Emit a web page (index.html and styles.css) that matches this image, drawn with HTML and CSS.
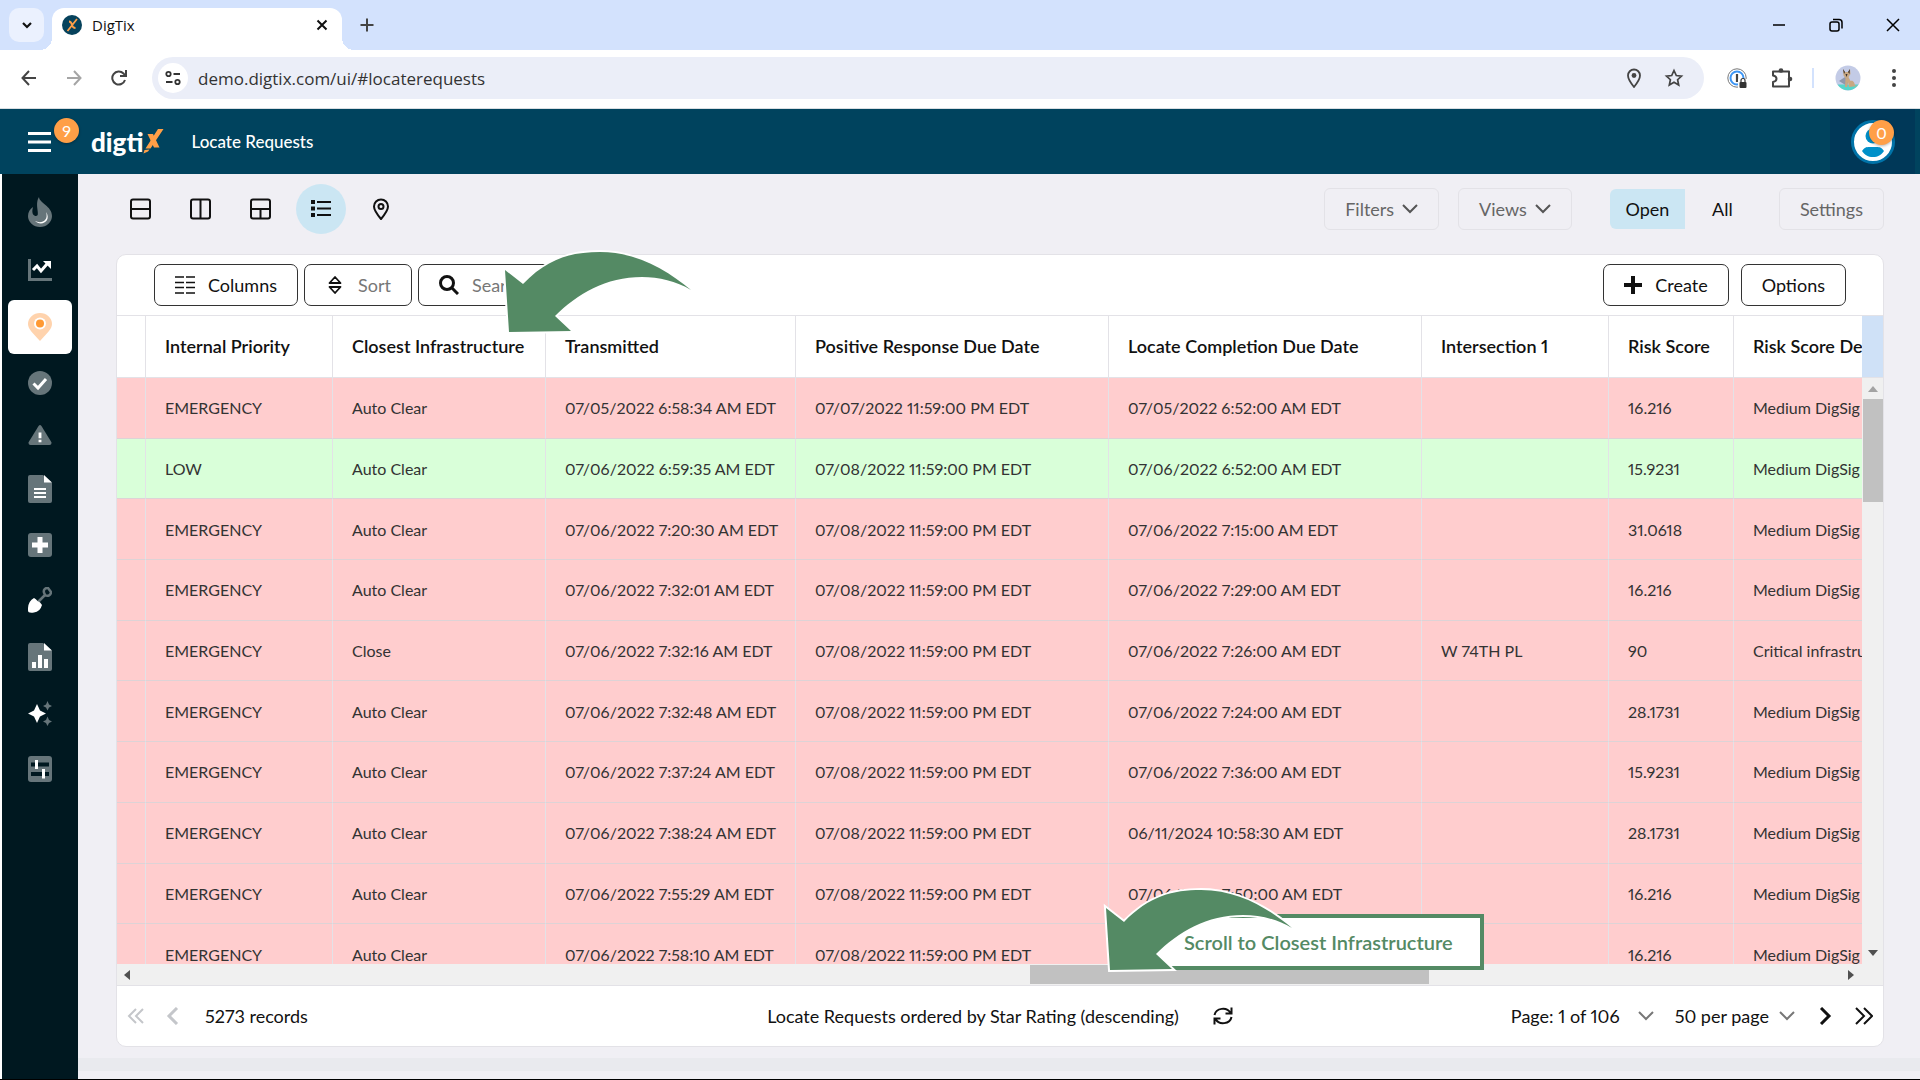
FILE: index.html
```html
<!DOCTYPE html>
<html lang="en">
<head>
    <meta charset="UTF-8">
    <meta name="viewport" content="width=device-width, initial-scale=1.0">
    <title>DigTix</title>
    <link rel="stylesheet" href="styles.css">
</head>
<body>
    <!-- Browser tabs -->
    <div class="tab-strip">
        <button class="tab-search" aria-label="Search tabs">
            <svg width="12" height="8" viewBox="0 0 12 8"><path d="M2 2l4 4 4-4" fill="none" stroke="#111" stroke-width="2.2"/></svg>
        </button>
        <div class="tab">
            <svg width="20" height="20" viewBox="0 0 20 20"><circle cx="10" cy="10" r="10" fill="#06425c"/><path d="M15 4L5.500 16M7 6.500c2 0 2.500 1.500 3 3.500s1.500 3 3.500 3" fill="none" stroke="#ff9f47" stroke-width="1.800"/></svg>
            <span class="tab-title">DigTix</span>
            <button class="tab-close" aria-label="Close tab">
                <svg width="12" height="12" viewBox="0 0 12 12"><path d="M1.500 1.500l9 9M10.500 1.500l-9 9" stroke="#111" stroke-width="2"/></svg>
            </button>
        </div>
        <button class="new-tab" aria-label="New tab">
            <svg width="14" height="14" viewBox="0 0 14 14"><path d="M7 .5v13M.5 7h13" stroke="#444" stroke-width="2"/></svg>
        </button>
        <div class="window-buttons">
            <button aria-label="Minimize"><svg width="14" height="14" viewBox="0 0 14 14"><path d="M1 7h12" stroke="#000" stroke-width="1.500"/></svg></button>
            <button aria-label="Restore"><svg width="14" height="14" viewBox="0 0 14 14" fill="none" stroke="#000" stroke-width="1.500"><rect x="1" y="4" width="9" height="9" rx="2"/><path d="M4 1.500h6a3 3 0 0 1 3 3v6"/></svg></button>
            <button aria-label="Close"><svg width="14" height="14" viewBox="0 0 14 14"><path d="M1 1l12 12M13 1L1 13" stroke="#000" stroke-width="1.500"/></svg></button>
        </div>
    </div>

    <!-- Address bar -->
    <div class="browser-bar">
        <button class="nav-button" aria-label="Back"><svg width="16" height="16" viewBox="0 0 16 16" fill="none" stroke="#444" stroke-width="2"><path d="M15 8H2M8 1L1.500 8 8 15"/></svg></button>
        <button class="nav-button" aria-label="Forward"><svg width="16" height="16" viewBox="0 0 16 16" fill="none" stroke="#a5a5a5" stroke-width="2"><path d="M1 8h13M8 1l6.500 7L8 15"/></svg></button>
        <button class="nav-button" aria-label="Reload"><svg width="16" height="16" viewBox="0 0 16 16" fill="none" stroke="#444" stroke-width="2"><path d="M14 10a6.500 6.500 0 1 1-1.500-6.500L14.500 6M15 0v6H9"/></svg></button>
        <div class="address">
            <button class="site-info" aria-label="Site information"><svg width="16" height="16" viewBox="0 0 16 16" fill="none" stroke="#333" stroke-width="1.800"><circle cx="3.500" cy="4" r="2.200"/><path d="M8.500 4H15M1 12h6.500"/><circle cx="12.500" cy="12" r="2.200"/></svg></button>
            <input class="url" type="text" aria-label="Address" value="demo.digtix.com/ui/#locaterequests">
            <button class="nav-button" aria-label="Location"><svg width="16" height="20" viewBox="0 0 16 20"><path d="M8 19C4 14 2 11 2 7.500a6 6 0 0 1 12 0C14 11 12 14 8 19z" fill="none" stroke="#444" stroke-width="1.800"/><circle cx="8" cy="7.500" r="2.400" fill="#444"/></svg></button>
            <button class="nav-button" aria-label="Bookmark"><svg width="20" height="20" viewBox="0 0 20 20"><path d="M10 2.500l2.300 5 5.200.6-3.900 3.600 1.100 5.300-4.700-2.700L5.300 17l1.100-5.300L2.500 8.100l5.200-.6z" fill="none" stroke="#444" stroke-width="1.700"/></svg></button>
        </div>
        <div class="extensions">
            <button class="nav-button" aria-label="Password manager"><svg width="20" height="20" viewBox="0 0 20 20" fill="none"><circle cx="10" cy="10" r="9.200" stroke="#777" stroke-width="1"/><circle cx="10" cy="10" r="6.500" stroke="#3d96f5" stroke-width="2"/><path d="M10 6v8" stroke="#444" stroke-width="2.200"/><rect x="11" y="11" width="9" height="9" fill="#fff"/><rect x="12.500" y="14" width="7" height="6" rx="1" fill="#333"/><path d="M14 14v-1.500a2 2 0 0 1 4 0V14" stroke="#333" stroke-width="1.200"/></svg></button>
            <button class="nav-button" aria-label="Extensions"><svg width="22" height="22" viewBox="0 0 22 22"><path d="M2 4.500h16v15H2V15c2.500-.5 3.500-1.500 3.500-3.200S4.500 9 2 8.500z" fill="none" stroke="#444" stroke-width="2" stroke-linejoin="round"/><circle cx="10" cy="3.500" r="2.300" fill="#444"/><circle cx="19" cy="12" r="2.300" fill="#444"/></svg></button>
            <span class="divider"></span>
            <button class="nav-button" aria-label="Profile"><svg width="26" height="26" viewBox="0 0 26 26"><circle cx="13" cy="13" r="12.500" fill="#c3cbe6"/><path d="M2.500 19.500h21a12.500 12.500 0 0 1-21 0z" fill="#55d6cb"/><path d="M4 16l6-4 4 2-2 7z" fill="#8f98ad"/><path d="M8 4l2 3h3l2-3 .5 5-2 3 2 4c3-1 4 2 4.500 4.500l3 .5-9 1-1-5-1 5h-2l.5-9-2-2.500z" fill="#c8a882"/><path d="M8 4l2 3-1 2zM15 4l-2 3 1.500 2zM10.500 9h2l-1 3z" fill="#3a302c"/></svg></button>
            <button class="nav-button" aria-label="Menu"><svg width="4" height="18" viewBox="0 0 4 18" fill="#444"><circle cx="2" cy="2" r="2"/><circle cx="2" cy="9" r="2"/><circle cx="2" cy="16" r="2"/></svg></button>
        </div>
    </div>

    <!-- App header -->
    <header class="app-header">
        <button class="menu-button" aria-label="Main menu">
            <svg width="23" height="20" viewBox="0 0 23 20"><path d="M0 1.500h23M0 10h23M0 18.500h23" stroke="#fff" stroke-width="3"/></svg>
            <span class="badge">9</span>
        </button>
        <a class="logo" href="#">digti<svg width="21" height="25" viewBox="0 0 21 25" fill="#ff9f47"><path d="M20.500 0H15L2.500 19.500H7.500zM1.500 21l5-.5L5 22.500l-4.500 2z"/><path d="M4.500 5h5.500l6.500 13.500H11z"/></svg></a>
        <h1 class="page-title">Locate Requests</h1>
        <button class="user-button" aria-label="Account">
            <svg width="44" height="46" viewBox="0 0 44 46"><circle cx="22" cy="23" r="20.500" fill="#fff" stroke="#0073a8" stroke-width="3"/><circle cx="22" cy="17" r="7.500" fill="#0090c9"/><path d="M11 32c3-5 6-4 11-4s8-1 11 4c-3 4-6 6-11 6s-8-2-11-6z" fill="#0090c9"/></svg>
            <span class="badge">0</span>
        </button>
    </header>

    <div class="app">
        <nav class="sidebar" aria-label="Modules">
            <a href="#" aria-label="Heat"><svg width="24" height="30" viewBox="0 0 24 30"><path d="M11 0c0 6 13 9 13 19a12 11 0 0 1-24 0c0-4 2-7 5-9-2 7 1 9 3 9C13 19 6 8 11 0z" fill="#66757a"/><path d="M18 15c3 9-5 12-11 9 6 6 17 0 11-9z" fill="#fff"/></svg></a>
            <a href="#" aria-label="Dashboard"><svg width="24" height="26" viewBox="0 0 24 26"><path d="M1.500 2v20.500H24" fill="none" stroke="#66757a" stroke-width="3"/><path d="M5 13l4-4 4 5 6-7" fill="none" stroke="#fff" stroke-width="3"/><path d="M15 4h8v8z" fill="#fff"/></svg></a>
            <a class="active" href="#" aria-label="Locate requests"><svg width="24" height="28" viewBox="0 0 24 28"><path d="M12 28C5 20 0 16 0 11a12 11 0 0 1 24 0c0 5-5 9-12 17z" fill="#ffd3ad"/><circle cx="12" cy="10.500" r="6" fill="#fff"/><circle cx="12" cy="10.500" r="4" fill="#ff9933"/></svg></a>
            <a href="#" aria-label="Completed"><svg width="24" height="24" viewBox="0 0 24 24"><circle cx="12" cy="12" r="12" fill="#66757a"/><path d="M5.500 12.500l4.500 4.500 8-9" fill="none" stroke="#fff" stroke-width="3"/></svg></a>
            <a href="#" aria-label="Alerts"><svg width="24" height="20" viewBox="0 0 24 21"><path d="M10.500 1q1.500-2 3 0L24 18q.5 3-2 3H2q-2.500 0-2-3z" fill="#66757a"/><path d="M12 8v6M12 15.500v2.500" stroke="#fff" stroke-width="3"/></svg></a>
            <a href="#" aria-label="Documents"><svg width="24" height="28" viewBox="0 0 24 28"><path d="M2 0h13l9 8v18q0 2-2 2H2q-2 0-2-2V2q0-2 2-2z" fill="#66757a"/><path d="M16 0l8 7.500h-8z" fill="#fff"/><path d="M6 14h12M6 18h12M6 22h12" stroke="#fff" stroke-width="2"/></svg></a>
            <a href="#" aria-label="Add"><svg width="24" height="24" viewBox="0 0 24 24"><rect width="24" height="24" rx="3" fill="#66757a"/><path d="M12 4v16M4 12h16" stroke="#fff" stroke-width="5"/></svg></a>
            <a href="#" aria-label="Excavators"><svg width="24" height="26" viewBox="0 0 24 26"><path d="M10 15l7-7M16 5.500c-1-3 2-5 4-4.500l3 4c0 3-3 5-6 3z" fill="none" stroke="#66757a" stroke-width="2.500"/><path d="M6 11q2 1 3.500 3 3 1 4.500 4-2 7-8 7.500-6 1-6-2-.5-9 6-12.500z" fill="#fff"/></svg></a>
            <a href="#" aria-label="Reports"><svg width="24" height="28" viewBox="0 0 24 28"><path d="M2 0h13l9 8v18q0 2-2 2H2q-2 0-2-2V2q0-2 2-2z" fill="#66757a"/><path d="M16 0l8 7.500h-8z" fill="#fff"/><path d="M6 25v-6M12 25V12M18 25v-9" stroke="#fff" stroke-width="4"/></svg></a>
            <a href="#" aria-label="Insights"><svg width="24" height="25" viewBox="0 0 24 25"><path d="M9 3l3 6.500 6 3-6 3L9 22l-3-6.500-6-3 6-3z" fill="#fff"/><path d="M19.500 0l1.500 3.500 3 1.500-3 1.500-1.500 3-1.500-3-3-1.500 3-1.500zM19.500 15.500L21 19l3 1.500-3 1.500-1.500 3-1.500-3-3-1.500 3-1.500z" fill="#66757a"/></svg></a>
            <a href="#" aria-label="Preferences"><svg width="24" height="26" viewBox="0 0 24 26"><rect width="24" height="26" rx="3" fill="#66757a"/><path d="M3 8.500h18M3 18h18" stroke="#001820" stroke-width="4"/><path d="M8.500 4v9M15.500 13v9.500" stroke="#fff" stroke-width="3"/></svg></a>
        </nav>

        <main class="content">
            <!-- Layout switcher and page filters -->
            <div class="page-tools">
                <div class="layouts">
                    <button aria-label="Rows"><svg width="22" height="22" viewBox="0 0 22 22"><rect x="1" y="1.500" width="19" height="19" rx="2"/><path d="M1 11h19"/></svg></button>
                    <button aria-label="Split"><svg width="22" height="22" viewBox="0 0 22 22"><rect x="1" y="1.500" width="19" height="19" rx="2"/><path d="M10.500 1.500v19"/></svg></button>
                    <button aria-label="Mixed"><svg width="22" height="22" viewBox="0 0 22 22"><rect x="1" y="1.500" width="19" height="19" rx="2"/><path d="M1 11h19M10.500 11v9.500"/></svg></button>
                    <button class="selected" aria-label="List"><svg width="22" height="22" viewBox="0 0 22 22"><path d="M7 4h14M7 10.500h14M7 17h14"/><path d="M1 4h4M1 10.500h4M1 17h4" stroke-width="4"/></svg></button>
                    <button aria-label="Map"><svg width="22" height="22" viewBox="0 0 22 22"><path d="M11 21C6 15 4 12 4 8.500a7 7 0 0 1 14 0C18 12 16 15 11 21z"/><circle cx="11" cy="8.500" r="2.500"/></svg></button>
                </div>
                <div class="filters">
                    <button class="ghost">Filters <svg width="16" height="10" viewBox="0 0 16 10"><path d="M1 1l7 7 7-7"/></svg></button>
                    <button class="ghost">Views <svg width="16" height="10" viewBox="0 0 16 10"><path d="M1 1l7 7 7-7"/></svg></button>
                    <div class="toggle">
                        <button class="on">Open</button>
                        <button>All</button>
                    </div>
                    <button class="ghost">Settings</button>
                </div>
            </div>

            <section class="panel">
                <div class="panel-tools">
                    <button class="outlined"><svg width="20" height="20" viewBox="0 0 20 20"><path d="M0 2h9M11 2h9M0 7.500h9M11 7.500h9M0 12.500h9M11 12.500h9M0 18h9M11 18h9" stroke="#111" stroke-width="1.500"/></svg>Columns</button>
                    <button class="outlined muted"><svg width="20" height="20" viewBox="0 0 20 20" fill="none" stroke="#111" stroke-width="1.800" stroke-linejoin="round"><path d="M4.500 8L10 2l5.500 6zM4.500 12l5.500 6 5.500-6z"/></svg>Sort</button>
                    <button class="outlined muted search"><svg width="20" height="20" viewBox="0 0 20 20" fill="none" stroke="#111" stroke-width="3"><circle cx="8" cy="8" r="6.500"/><path d="M13 13l6 6"/></svg>Search</button>
                    <span class="spacer"></span>
                    <button class="outlined create"><svg width="18" height="20" viewBox="0 0 18 20"><path d="M9 1v18M0 10h18" stroke="#111" stroke-width="4"/></svg>Create</button>
                    <button class="outlined">Options</button>
                </div>

                <div class="grid">
                    <div class="grid-view">
                        <table>
                            <colgroup>
                                <col class="w-stub"><col class="w-m"><col class="w-l"><col class="w-xl"><col class="w-xxl"><col class="w-xxl"><col class="w-m"><col class="w-s"><col class="w-xl">
                            </colgroup>
                            <thead>
                                <tr><th></th><th>Internal Priority</th><th>Closest Infrastructure</th><th>Transmitted</th><th>Positive Response Due Date</th><th>Locate Completion Due Date</th><th>Intersection 1</th><th>Risk Score</th><th>Risk Score Details</th></tr>
                            </thead>
                            <tbody>
                                <tr><td></td><td>EMERGENCY</td><td>Auto Clear</td><td>07/05/2022 6:58:34 AM EDT</td><td>07/07/2022 11:59:00 PM EDT</td><td>07/05/2022 6:52:00 AM EDT</td><td></td><td>16.216</td><td>Medium DigSig</td></tr>
                                <tr class="low"><td></td><td>LOW</td><td>Auto Clear</td><td>07/06/2022 6:59:35 AM EDT</td><td>07/08/2022 11:59:00 PM EDT</td><td>07/06/2022 6:52:00 AM EDT</td><td></td><td>15.9231</td><td>Medium DigSig</td></tr>
                                <tr><td></td><td>EMERGENCY</td><td>Auto Clear</td><td>07/06/2022 7:20:30 AM EDT</td><td>07/08/2022 11:59:00 PM EDT</td><td>07/06/2022 7:15:00 AM EDT</td><td></td><td>31.0618</td><td>Medium DigSig</td></tr>
                                <tr><td></td><td>EMERGENCY</td><td>Auto Clear</td><td>07/06/2022 7:32:01 AM EDT</td><td>07/08/2022 11:59:00 PM EDT</td><td>07/06/2022 7:29:00 AM EDT</td><td></td><td>16.216</td><td>Medium DigSig</td></tr>
                                <tr><td></td><td>EMERGENCY</td><td>Close</td><td>07/06/2022 7:32:16 AM EDT</td><td>07/08/2022 11:59:00 PM EDT</td><td>07/06/2022 7:26:00 AM EDT</td><td>W 74TH PL</td><td>90</td><td>Critical infrastru</td></tr>
                                <tr><td></td><td>EMERGENCY</td><td>Auto Clear</td><td>07/06/2022 7:32:48 AM EDT</td><td>07/08/2022 11:59:00 PM EDT</td><td>07/06/2022 7:24:00 AM EDT</td><td></td><td>28.1731</td><td>Medium DigSig</td></tr>
                                <tr><td></td><td>EMERGENCY</td><td>Auto Clear</td><td>07/06/2022 7:37:24 AM EDT</td><td>07/08/2022 11:59:00 PM EDT</td><td>07/06/2022 7:36:00 AM EDT</td><td></td><td>15.9231</td><td>Medium DigSig</td></tr>
                                <tr><td></td><td>EMERGENCY</td><td>Auto Clear</td><td>07/06/2022 7:38:24 AM EDT</td><td>07/08/2022 11:59:00 PM EDT</td><td>06/11/2024 10:58:30 AM EDT</td><td></td><td>28.1731</td><td>Medium DigSig</td></tr>
                                <tr><td></td><td>EMERGENCY</td><td>Auto Clear</td><td>07/06/2022 7:55:29 AM EDT</td><td>07/08/2022 11:59:00 PM EDT</td><td>07/06/2022 7:50:00 AM EDT</td><td></td><td>16.216</td><td>Medium DigSig</td></tr>
                                <tr><td></td><td>EMERGENCY</td><td>Auto Clear</td><td>07/06/2022 7:58:10 AM EDT</td><td>07/08/2022 11:59:00 PM EDT</td><td></td><td></td><td>16.216</td><td>Medium DigSig</td></tr>
                            </tbody>
                        </table>
                    </div>
                    <div class="v-side">
                        <div class="v-head"></div>
                        <div class="v-scroll">
                            <svg width="10" height="6" viewBox="0 0 10 6"><path d="M0 6l5-6 5 6z" fill="#a3a3a3"/></svg>
                            <div class="v-track"><div class="v-thumb"></div></div>
                            <svg width="10" height="6" viewBox="0 0 10 6"><path d="M0 0l5 6 5-6z" fill="#505050"/></svg>
                        </div>
                    </div>
                </div>
                <div class="h-scroll">
                    <svg width="6" height="10" viewBox="0 0 6 10"><path d="M6 0L0 5l6 5z" fill="#505050"/></svg>
                    <div class="h-track"><div class="h-thumb"></div></div>
                    <svg width="6" height="10" viewBox="0 0 6 10"><path d="M0 0l6 5-6 5z" fill="#505050"/></svg>
                </div>

                <footer class="pager">
                    <div class="pager-left">
                        <button aria-label="First page" disabled><svg width="18" height="18" viewBox="0 0 18 18"><path d="M9 2L2 9l7 7M16 2L9 9l7 7"/></svg></button>
                        <button aria-label="Previous page" disabled><svg width="18" height="18" viewBox="0 0 18 18"><path d="M13 1L5 9l8 8" stroke-width="3"/></svg></button>
                        <span class="records">5273 records</span>
                    </div>
                    <div class="pager-mid">
                        <span>Locate Requests ordered by Star Rating (descending)</span>
                        <button aria-label="Refresh"><svg width="20" height="20" viewBox="0 0 20 20"><path d="M1.500 9a8.500 7.500 0 0 1 16-2M18.500 1.500v6h-6M18.500 11a8.500 7.500 0 0 1-16 2M1.500 18.500v-6h6"/></svg></button>
                    </div>
                    <div class="pager-right">
                        <button class="drop">Page: 1 of 106 <svg width="16" height="10" viewBox="0 0 16 10"><path d="M1 1l7 7 7-7"/></svg></button>
                        <button class="drop per-page">50 per page <svg width="16" height="10" viewBox="0 0 16 10"><path d="M1 1l7 7 7-7"/></svg></button>
                        <button aria-label="Next page"><svg width="18" height="18" viewBox="0 0 18 18"><path d="M5 1l8 8-8 8" stroke-width="3"/></svg></button>
                        <button aria-label="Last page"><svg width="18" height="18" viewBox="0 0 18 18"><path d="M1 1l8 8-8 8M9 1l8 8-8 8"/></svg></button>
                    </div>
                </footer>

                <!-- Tutorial callouts -->
                <svg class="arrow arrow-column" width="200" height="100" viewBox="0 0 200 100"><path d="M5 25L23 39C48 13 72 7 100 7c38 0 68 19 91 38-15-9-32-13-49-13C106 32 77 49 55 71l16 15L9 87z"/></svg>
                <div class="callout">Scroll to Closest Infrastructure</div>
                <svg class="arrow arrow-scroll" width="200" height="100" viewBox="0 0 200 100"><path d="M5 25L23 39C48 13 72 7 100 7c38 0 68 19 91 38-15-9-32-13-49-13C106 32 77 49 55 71l16 15L9 87z"/></svg>
            </section>
            <div class="bottom-strip"></div>
        </main>
    </div>
</body>
</html>
```
FILE: styles.css
```css
* {
    box-sizing: border-box;
}

body {
    margin: 0;
    height: 100vh;
    display: flex;
    flex-direction: column;
    overflow: hidden;
    font-family: Lato, "Liberation Sans", sans-serif;
    font-size: 18px;
    font-variant-numeric: proportional-nums;
    color: #111;
    background-color: #fff;
    border-bottom: 1px solid #000;
}

button {
    display: flex;
    align-items: center;
    justify-content: center;
    padding: 0;
    border: none;
    background: none;
    font: inherit;
    color: inherit;
    cursor: pointer;
}

svg {
    flex: none;
}

/* Browser tabs */
.tab-strip {
    display: flex;
    height: 50px;
    padding: 8px 10px 0 9px;
    background-color: #d3e2fd;
    font-family: "Open Sans", sans-serif;
    font-size: 15px;
}

.tab-search {
    width: 35px;
    height: 34px;
    border-radius: 10px;
    background-color: #ebf1fe;
}

.tab {
    position: relative;
    display: flex;
    align-items: center;
    width: 290px;
    height: 42px;
    margin-left: 8px;
    padding: 0 12px 8px 10px;
    border-radius: 12px 12px 0 0;
    background-color: #fff;
}

/* Flared feet of the active tab */
.tab::before,
.tab::after {
    content: "";
    position: absolute;
    bottom: 0;
    width: 12px;
    height: 12px;
}

.tab::before {
    left: -12px;
    background: radial-gradient(circle at 0 0, transparent 12px, #fff 12px);
}

.tab::after {
    right: -12px;
    background: radial-gradient(circle at 100% 0, transparent 12px, #fff 12px);
}

.tab-title {
    flex: 1;
    margin-left: 10px;
}

.tab-close {
    width: 16px;
    height: 16px;
}

.new-tab {
    width: 34px;
    height: 34px;
    margin-left: 8px;
}

.window-buttons {
    display: flex;
    gap: 23px;
    margin-left: auto;
}

.window-buttons button {
    width: 34px;
    height: 34px;
}

/* Address bar */
.browser-bar {
    display: flex;
    align-items: center;
    height: 59px;
    padding: 0 16px 2px 14px;
    border-bottom: 1px solid #d9dee2;
    background-color: #fff;
}

.nav-button {
    min-width: 30px;
    height: 30px;
    margin-right: 15px;
}

.address {
    flex: 1;
    display: flex;
    align-items: center;
    height: 42px;
    margin-left: 3px;
    padding: 0 0 0 6px;
    border-radius: 21px;
    background-color: #ebeef8;
}

.address .nav-button {
    margin-right: 10px;
}

.address .nav-button:last-child {
    margin-right: 15px;
}

.site-info {
    width: 30px;
    height: 30px;
    border-radius: 50%;
    background-color: #fff;
}

.url {
    flex: 1;
    padding: 0 10px;
    border: none;
    background: none;
    color: #333;
    font-family: "Open Sans", sans-serif;
    font-size: 17px;
}

.extensions {
    display: flex;
    align-items: center;
    margin-left: 18px;
}

.extensions .nav-button:last-child {
    min-width: 20px;
    margin-left: 6px;
    margin-right: 0;
}

.divider {
    width: 2px;
    height: 20px;
    margin-right: 19px;
    background-color: #d3e2fd;
}

/* App header */
.app-header {
    display: flex;
    align-items: center;
    height: 65px;
    padding: 0 5px 0 28px;
    background-color: #00435e;
    color: #fff;
}

.menu-button {
    position: relative;
}

.badge {
    position: absolute;
    width: 25px;
    height: 25px;
    border-radius: 50%;
    background-color: #ff9f47;
    box-shadow: 0 1px 3px rgba(0, 0, 0, 0.3);
    color: #fff;
    font-size: 16px;
    line-height: 25px;
    text-align: center;
}

.menu-button .badge {
    top: -14px;
    left: 26px;
}

.logo {
    display: flex;
    align-items: center;
    margin-left: 40px;
    color: #fff;
    font-size: 26px;
    font-weight: 900;
    line-height: 32px;
    text-decoration: none;
}

.page-title {
    margin: 0 0 0 27px;
    font-size: 17px;
    font-weight: 500;
}

.user-button {
    position: relative;
    width: 85px;
    height: 65px;
    margin-left: auto;
    background-color: #003858;
}

.user-button .badge {
    top: 11px;
    left: 39px;
}

/* Sidebar */
.app {
    flex: 1;
    display: flex;
    min-height: 0;
    padding-left: 2px;
}

.sidebar {
    display: flex;
    flex-direction: column;
    gap: 4px;
    width: 76px;
    padding: 10px 6px;
    background-color: #001820;
}

.sidebar a {
    display: flex;
    justify-content: center;
    padding: 13px 0;
    border-radius: 6px;
}

.sidebar .active {
    background-color: #fff;
}

.content {
    flex: 1;
    display: flex;
    flex-direction: column;
    min-width: 0;
    background-color: #f0eff4;
}

/* Layout switcher and page filters */
.page-tools {
    display: flex;
    justify-content: space-between;
    align-items: center;
    height: 80px;
    padding: 0 36px 10px 38px;
}

.layouts {
    display: flex;
    gap: 10px;
}

.layouts button {
    width: 50px;
    height: 50px;
    border-radius: 50%;
}

.layouts svg {
    fill: none;
    stroke: #111;
    stroke-width: 2;
}

.layouts .selected {
    background-color: #cbe6f3;
}

.filters {
    display: flex;
    align-items: center;
}

.ghost {
    gap: 8px;
    height: 42px;
    margin-right: 19px;
    padding: 0 20px;
    border: 1px solid #e3e2e7;
    border-radius: 6px;
    color: #666;
}

.ghost svg,
.drop svg {
    fill: none;
    stroke: #555;
    stroke-width: 2;
}

.ghost:last-child {
    margin-right: 0;
}

.toggle {
    display: flex;
    margin: 0 19px;
}

.toggle button {
    width: 75px;
    height: 40px;
}

.toggle .on {
    border-radius: 6px 0 0 6px;
    background-color: #cbe6f3;
}

/* Data panel */
.panel {
    position: relative;
    flex: 1;
    display: flex;
    flex-direction: column;
    min-height: 0;
    margin: 0 36px 0 38px;
    border: 1px solid #e3e2e7;
    border-radius: 10px;
    background-color: #fff;
}

.panel-tools {
    display: flex;
    align-items: center;
    gap: 6px;
    height: 61px;
    padding: 0 37px;
    border-bottom: 1px solid #e3e2e7;
}

.outlined {
    gap: 13px;
    height: 42px;
    padding: 0 20px;
    border: 1px solid #333;
    border-radius: 7px;
}

.muted {
    color: #777;
}

.search {
    justify-content: flex-start;
    width: 140px;
}

.create {
    margin-right: 6px;
}

.spacer {
    flex: 1;
}

.grid {
    flex: 1;
    display: flex;
    min-height: 0;
}

.grid-view {
    flex: 1;
    overflow: hidden;
}

table {
    width: 1866px;
    height: 669px;
    table-layout: fixed;
    border-collapse: separate;
    border-spacing: 0;
}

.w-stub {
    width: 29px;
}

.w-s {
    width: 125px;
}

.w-m {
    width: 187px;
}

.w-l {
    width: 213px;
}

.w-xl {
    width: 250px;
}

.w-xxl {
    width: 313px;
}

th,
td {
    padding: 0 0 0 19px;
    border-right: 1px solid #e3e2e7;
    border-bottom: 1px solid #ddd3d6;
    text-align: left;
    white-space: nowrap;
}

th {
    height: 62px;
    padding-bottom: 2px;
    border-bottom-color: #e3e2e7;
    font-weight: 600;
}

td {
    background-color: #ffcdce;
    color: #333;
    font-size: 16px;
}

.low td {
    background-color: #d9ffd9;
}

/* Scrollbars */
.v-side {
    display: flex;
    flex-direction: column;
    width: 21px;
}

.v-head {
    height: 62px;
    border-bottom: 1px solid #e3e2e7;
    background-color: #cfe1f7;
}

.v-scroll {
    flex: 1;
    display: flex;
    flex-direction: column;
    align-items: center;
    gap: 7px;
    padding: 8px 0;
    background-color: #f0f0f0;
}

.v-track {
    flex: 1;
    width: 20px;
}

.v-thumb {
    height: 19%;
    background-color: #c1c1c1;
}

.h-scroll {
    display: flex;
    align-items: center;
    height: 22px;
    padding: 0 29px 0 7px;
    border-bottom: 1px solid #e3e2e7;
    background-color: #f0f0f0;
}

.h-track {
    flex: 1;
    padding-left: 52%;
}

.h-thumb {
    width: 399px;
    height: 19px;
    background-color: #c1c1c1;
}

/* Pager */
.pager {
    display: grid;
    grid-template-columns: 1fr auto 1fr;
    align-items: center;
    height: 60px;
    padding: 0 10px;
}

.pager svg {
    fill: none;
    stroke: #111;
    stroke-width: 2;
}

.pager-left,
.pager-mid,
.pager-right {
    display: flex;
    align-items: center;
    gap: 19px;
}

.pager-right {
    gap: 21px;
    justify-content: flex-end;
}

.pager .pager-left svg {
    stroke: #c4c6ca;
}

.records {
    margin-left: 4px;
}

.pager-mid {
    gap: 34px;
}

.drop {
    gap: 18px;
}

.per-page {
    gap: 10px;
}

.pager .drop svg {
    stroke: #777;
    stroke-width: 2;
}

/* Tutorial callouts */
.arrow {
    position: absolute;
}

.arrow path {
    fill: #548a64;
    stroke: #fff;
    stroke-width: 4;
    paint-order: stroke;
}

.arrow-column {
    top: -10px;
    left: 383px;
}

.arrow-scroll {
    top: 628px;
    left: 984px;
}

.callout {
    position: absolute;
    top: 659px;
    left: 1036px;
    padding: 0 27px;
    border: 4px solid #548a64;
    background-color: #fff;
    color: #548a64;
    font-size: 20px;
    font-weight: 600;
    line-height: 48px;
}

.bottom-strip {
    height: 13px;
    margin: 11px 0 8px;
    background-color: #e9eaee;
}
```
